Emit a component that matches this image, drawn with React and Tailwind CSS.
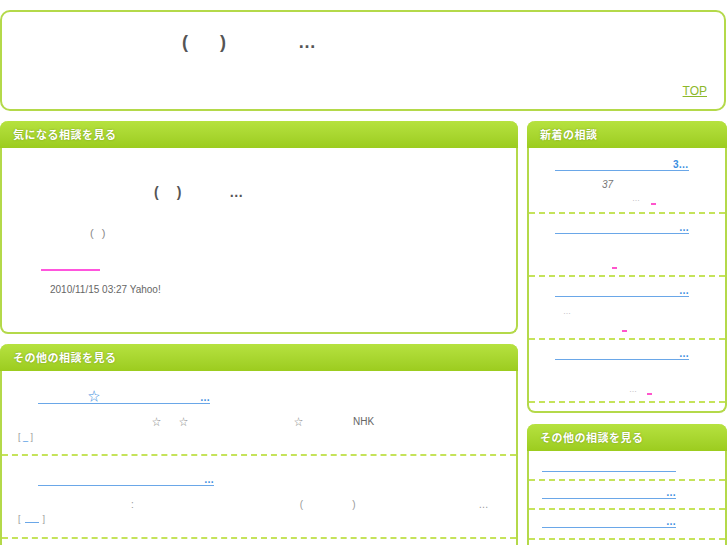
import React from 'react';

const font = { fontFamily: '"Liberation Sans", "Noto Sans CJK JP", sans-serif' };

function Gap({ w }) {
    return <span className="inline-block" style={{ width: w }}></span>;
}

function Link({ w, tail }) {
    return (
        <span className="inline-flex items-end border-b border-[#6aa7e8] text-[#3b8ee0] font-bold leading-none">
            <span className="inline-block" style={{ width: w }}></span>
            {tail && <span className="text-[10px] leading-[10px]">{tail}</span>}
        </span>
    );
}

function Pink({ left, top }) {
    return <div className="absolute w-[5px] h-[2px] bg-[#ff55cc]" style={{ left, top }}></div>;
}

function PanelHead({ title }) {
    return (
        <div className="h-[27px] rounded-t-[8px] bg-gradient-to-b from-[#b6e23f] to-[#9ccc1e] flex items-center pl-[13px]">
            <span
                className="text-white text-[11px] font-bold tracking-[0.5px]"
                style={{ fontFamily: '"Noto Sans CJK JP", sans-serif', textShadow: '0 0 2px #7a9a20' }}
            >
                {title}
            </span>
        </div>
    );
}

function Dash() {
    return <div className="border-b-2 border-dashed border-[#c5e35a]"></div>;
}

export default function App() {
    return (
        <div className="w-[727px] h-[545px] overflow-hidden bg-white" style={font}>
            <div className="mt-[10px] mx-0 h-[101px] w-[726px] border-2 border-[#b4d94a] rounded-[10px] relative">
                <div className="pt-[18px] pl-[180px] text-[18px] font-bold text-[#555] leading-[24px]">
                    (<Gap w={32} />)<Gap w={72} />…
                </div>
                <div className="absolute right-[17px] top-[70px] text-[12px] text-[#8cb82a] underline">TOP</div>
            </div>

            <div className="flex mt-[10px] gap-[9px]">
                <div className="w-[518px] flex flex-col gap-[10px]">
                    <div className="h-[213px] border-2 border-t-0 border-[#b4d94a] rounded-[8px] flex flex-col">
                        <div className="-mx-[2px]"><PanelHead title="気になる相談を見る" /></div>
                        <div className="mt-[35px] pl-[152px] text-[14px] font-bold text-[#555] leading-[18px]">
                            (<Gap w={18} />)<Gap w={48} />…
                        </div>
                        <div className="mt-[25px] pl-[88px] text-[11px] text-[#888] leading-[14px]">
                            (<Gap w={8} />)
                        </div>
                        <div className="mt-[29px] ml-[39px] w-[59px] h-[2px] bg-[#ff55dd]"></div>
                        <div className="mt-[13px] pl-[48px] text-[10px] text-[#666] leading-[12px]">2010/11/15 03:27 Yahoo!</div>
                    </div>

                    <div className="border-2 border-t-0 border-[#b4d94a] rounded-t-[8px] flex flex-col h-[250px]">
                        <div className="-mx-[2px]"><PanelHead title="その他の相談を見る" /></div>
                        <div className="mt-[20px] pl-[36px] flex">
                            <span className="inline-flex items-end border-b border-[#6aa7e8] text-[#3b8ee0] font-bold leading-none">
                                <span className="inline-block w-[50px]"></span>
                                <span className="text-[12px] font-normal leading-[12px]">☆</span>
                                <span className="inline-block w-[100px]"></span>
                                <span className="text-[10px] leading-[10px]">…</span>
                            </span>
                        </div>
                        <div className="mt-[12px] pl-[150px] text-[10px] text-[#888] leading-[12px] flex items-center">
                            <span className="text-[9px]">☆</span><Gap w={18} /><span className="text-[9px]">☆</span>
                            <Gap w={106} /><span className="text-[9px]">☆</span><Gap w={50} />
                            <span className="text-[#666]">NHK</span>
                        </div>
                        <div className="pl-[16px] mt-[3px] text-[9px] text-[#999] leading-[12px]">
                            [ <span className="text-[#3b8ee0]">_</span> ]
                        </div>
                        <div className="mt-[11px]"><Dash /></div>
                        <div className="mt-[19px] pl-[36px] flex">
                            <Link w={166} tail="…" />
                        </div>
                        <div className="mt-[13px] text-[10px] text-[#999] leading-[12px] flex">
                            <span className="ml-[129px]">:</span>
                            <span className="ml-[166px]">(</span>
                            <span className="ml-[49px]">)</span>
                            <span className="ml-[123px]">…</span>
                        </div>
                        <div className="pl-[16px] mt-[2px] text-[9px] text-[#999] leading-[12px] flex items-center">
                            [<span className="inline-block w-[14px] h-[1px] bg-[#6aa7e8] mx-[4px] mt-[6px]"></span>]
                        </div>
                        <div className="mt-[12px]"><Dash /></div>
                    </div>
                </div>

                <div className="w-[200px] flex flex-col gap-[11px]">
                    <div className="h-[292px] border-2 border-t-0 border-[#b4d94a] rounded-[8px] flex flex-col">
                        <div className="-mx-[2px]"><PanelHead title="新着の相談" /></div>
                        <div className="h-[64px] pt-[12px] pl-[26px] flex items-start relative">
                            <Link w={118} tail="3…" />
                            <div className="absolute left-[73px] top-[31px] text-[10px] leading-[12px] text-[#777] italic">37</div>
                            <div className="absolute left-[103px] top-[46px] text-[8px] leading-[10px] text-[#aaa]">…</div>
                            <Pink left={122} top={55} />
                        </div>
                        <Dash />
                        <div className="h-[61px] pt-[9px] pl-[26px] flex items-start relative">
                            <Link w={124} tail="…" />
                            <Pink left={83} top={53} />
                        </div>
                        <Dash />
                        <div className="h-[61px] pt-[9px] pl-[26px] flex items-start relative">
                            <Link w={124} tail="…" />
                            <div className="absolute left-[34px] top-[30px] text-[8px] leading-[10px] text-[#aaa]">…</div>
                            <Pink left={93} top={53} />
                        </div>
                        <Dash />
                        <div className="h-[61px] pt-[9px] pl-[26px] flex items-start relative">
                            <Link w={124} tail="…" />
                            <div className="absolute left-[100px] top-[45px] text-[8px] leading-[10px] text-[#aaa]">…</div>
                            <Pink left={118} top={53} />
                        </div>
                        <Dash />
                    </div>

                    <div className="border-2 border-t-0 border-[#b4d94a] rounded-t-[8px] flex flex-col h-[130px]">
                        <div className="-mx-[2px]"><PanelHead title="その他の相談を見る" /></div>
                        <div className="h-[28px] pl-[13px] pt-[20px] flex items-start">
                            <Link w={134} />
                        </div>
                        <Dash />
                        <div className="h-[27px] pl-[13px] pt-[7px] flex items-start">
                            <Link w={124} tail="…" />
                        </div>
                        <Dash />
                        <div className="h-[28px] pl-[13px] pt-[7px] flex items-start">
                            <Link w={124} tail="…" />
                        </div>
                        <Dash />
                    </div>
                </div>
            </div>
        </div>
    );
}
